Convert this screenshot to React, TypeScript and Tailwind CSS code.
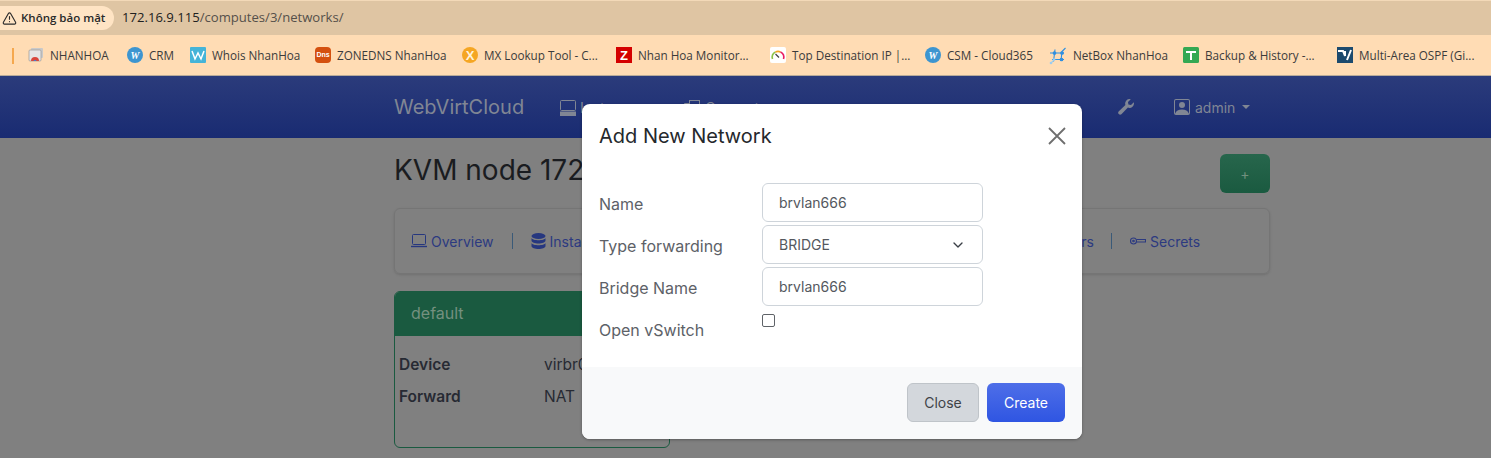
import { AlertTriangle, ChevronDown } from "lucide-react";

// favicons for the bookmark bar
function Fav({ kind }: { kind: string }) {
  if (kind === "w") {
    return (
      <span className="flex h-4 w-4 items-center justify-center rounded-full bg-[#3d95d0] text-[10px] font-bold italic text-white font-['Liberation_Serif',serif]">
        W
      </span>
    );
  }
  if (kind === "chrome") {
    return (
      <svg width="16" height="16" viewBox="0 0 16 16">
        <rect x="3" y="1" width="12" height="10" rx="1" fill="#c9c9c9" />
        <rect x="1" y="3" width="12" height="11" rx="1" fill="#e6e6e6" stroke="#9a9a9a" strokeWidth="0.7" />
        <path d="M3 14a4 4 0 0 1 8 0z" fill="#d9473d" />
        <path d="M5.5 14a1.6 1.6 0 0 1 3 0z" fill="#3d7fd9" />
      </svg>
    );
  }
  if (kind === "whois") {
    return (
      <svg width="16" height="16" viewBox="0 0 16 16">
        <rect width="16" height="16" rx="1" fill="#45b4d8" />
        <path d="M2 4l3 8 3-6 3 6 3-8" fill="none" stroke="#fff" strokeWidth="1.5" />
      </svg>
    );
  }
  if (kind === "dns") {
    return (
      <span className="flex h-4 w-4 items-center justify-center rounded-sm bg-[#d4500f] text-[7px] font-bold text-white font-['Liberation_Sans',sans-serif]">
        Dns
      </span>
    );
  }
  if (kind === "mx") {
    return (
      <span className="flex h-4 w-4 items-center justify-center rounded-full bg-[#f5a623] text-[13px] font-bold text-[#fff3dc] font-['Liberation_Sans',sans-serif]">
        X
      </span>
    );
  }
  if (kind === "z") {
    return (
      <span className="flex h-4 w-4 items-center justify-center bg-[#d40000] text-[13px] font-bold text-white font-['Liberation_Sans',sans-serif]">
        Z
      </span>
    );
  }
  if (kind === "gauge") {
    return (
      <svg width="16" height="16" viewBox="0 0 16 16">
        <rect width="16" height="16" rx="2" fill="#fff" />
        <path d="M2.500 12a6 6 0 0 1 3-7" fill="none" stroke="#8bc34a" strokeWidth="1.6" />
        <path d="M5.500 5a6 6 0 0 1 5 0" fill="none" stroke="#f5a623" strokeWidth="1.6" />
        <path d="M10.500 5a6 6 0 0 1 3 7" fill="none" stroke="#e91e63" strokeWidth="1.6" />
        <path d="M5.500 7l3.500 3.500" stroke="#444" strokeWidth="1.2" />
      </svg>
    );
  }
  if (kind === "netbox") {
    return (
      <svg width="18" height="18" viewBox="0 0 18 18" fill="none" stroke="#2f8fe0" strokeWidth="1.1">
        <path d="M1 6h14M3 12.500h12M6 2.500l-1.500 12M13 4l-1 10M16.500 1L13 4.500" />
        <path d="M5 13l-3 3" stroke="#9ccdf0" />
        <circle cx="13" cy="6" r="1.300" fill="#2f8fe0" />
        <circle cx="12.500" cy="12.500" r="1.300" fill="#2f8fe0" />
        <circle cx="5.500" cy="6" r="1.300" fill="#2f8fe0" />
        <circle cx="5" cy="12.500" r="1.300" fill="#9ccdf0" stroke="none" />
        <circle cx="2" cy="16" r="1.300" fill="#9ccdf0" stroke="none" />
      </svg>
    );
  }
  if (kind === "sheet") {
    return (
      <svg width="16" height="16" viewBox="0 0 16 16">
        <rect width="16" height="16" rx="1.500" fill="#34a853" />
        <path d="M3 5h10M8 5v8" stroke="#fff" strokeWidth="2" />
      </svg>
    );
  }
  return (
    <svg width="16" height="16" viewBox="0 0 16 16">
      <rect width="16" height="16" fill="#1c4a6e" />
      <path d="M1 4h5l2 5V4M10 13l4-10" fill="none" stroke="#fff" strokeWidth="2" />
    </svg>
  );
}

const bookmarks = [
  { kind: "chrome", label: "NHANHOA", w: "w-[99px]" },
  { kind: "w", label: "CRM", w: "w-[63px]" },
  { kind: "whois", label: "Whois NhanHoa", w: "w-[125px]" },
  { kind: "dns", label: "ZONEDNS NhanHoa", w: "w-[147px]" },
  { kind: "mx", label: "MX Lookup Tool - C...", w: "w-[154px]" },
  { kind: "z", label: "Nhan Hoa Monitor...", w: "w-[154px]" },
  { kind: "gauge", label: "Top Destination IP |...", w: "w-[155px]" },
  { kind: "w", label: "CSM - Cloud365", w: "w-[124px]" },
  { kind: "netbox", label: "NetBox NhanHoa", w: "w-[134px]" },
  { kind: "sheet", label: "Backup & History -...", w: "w-[154px]" },
  { kind: "vmware", label: "Multi-Area OSPF (Gi...", w: "w-[150px]" },
];

function Field({ label, children }: { label: string; children: React.ReactNode }) {
  return (
    <div className="flex h-[39px] items-center">
      <label className="w-[163px] pt-[3px] text-[16px] text-[#5d6167]">{label}</label>
      {children}
    </div>
  );
}

export default function App() {
  return (
    <div className="relative h-[458px] w-[1491px] overflow-hidden bg-[#808080] font-['Inter',sans-serif]">
      {/* browser chrome */}
      <div className="flex h-[35px] items-center border-t border-[#f3d9b8] bg-[#dfc5a3]">
        <div className="flex h-[24px] w-[114px] items-center gap-[4px] rounded-r-full bg-[#ffe4c4] pl-[2px] font-['Open_Sans',sans-serif] text-[11.5px] font-semibold text-[#2a2a2a]">
          <AlertTriangle size={15} strokeWidth={1.8} />
          <span>Không bảo mật</span>
        </div>
        <div className="ml-[8px] font-['Open_Sans',sans-serif] text-[13.1px] text-[#55504a]">
          <span className="text-[#202020]">172.16.9.115</span>/computes/3/networks/
        </div>
      </div>
      <div className="flex h-[40px] items-center bg-[#ffdcb4] pt-[1px] font-['Open_Sans',sans-serif] text-[11.7px] text-[#3b3b3b]">
        <div className="ml-[12px] mr-[14px] h-[16px] w-[2px] bg-[#f5a84e]" />
        {bookmarks.map((b, i) => (
          <div key={i} className={`flex items-center gap-[6px] whitespace-nowrap ${b.w}`}>
            <Fav kind={b.kind} />
            <span>{b.label}</span>
          </div>
        ))}
      </div>
      <div className="h-px bg-[#b8ab9a]" />

      {/* navbar, dimmed by the modal backdrop */}
      <nav className="flex h-[62px] items-center bg-gradient-to-b from-[#2b3b7b] to-[#192b72] pl-[394px] text-[14.5px] text-[#808694]">
        <span className="w-[166px] text-[20px]">WebVirtCloud</span>
        <div className="flex w-[124px] items-center gap-[4px] pt-[2px]">
          <svg width="16" height="16" viewBox="0 0 16 16" fill="none" stroke="currentColor">
            <rect x="0.500" y="0.500" width="15" height="10" rx="1" />
            <rect x="0.500" y="12" width="15" height="3.500" fill="currentColor" />
          </svg>
          <span>Instances</span>
        </div>
        <div className="flex w-[434px] items-center gap-[5px] pt-[2px]">
          <svg width="16" height="16" viewBox="0 0 16 16" fill="none" stroke="currentColor">
            <rect x="5.500" y="0.500" width="10" height="8" />
            <path d="M0.500 3.500h5M0.500 3.500v8h10v-3" />
          </svg>
          <span>Computes</span>
        </div>
        <svg width="16" height="16" viewBox="0 0 16 16" fill="currentColor">
          <path d="M15.800 3.200a4.500 4.500 0 0 1-5.900 5.400L3.400 15.300a2 2 0 0 1-2.800-2.800l6.800-6.500A4.500 4.500 0 0 1 12.800.200L10 3l.4 2.600 2.600.4z" />
        </svg>
        <svg className="ml-[40px]" width="16" height="16" viewBox="0 0 16 16" fill="currentColor">
          <path d="M2 0h12a2 2 0 0 1 2 2v12a2 2 0 0 1-2 2H2a2 2 0 0 1-2-2V2a2 2 0 0 1 2-2zm0 1a1 1 0 0 0-1 1v12l.2.4C2 12 4.500 10.500 8 10.500s6 1.500 6.800 3.900L15 14V2a1 1 0 0 0-1-1z" />
          <circle cx="8" cy="6" r="3" />
        </svg>
        <span className="ml-[5px] text-[14px]">admin</span>
        <span className="ml-[7px] h-0 w-0 border-x-[4px] border-t-[4px] border-x-transparent border-t-[#808694]" />
      </nav>

      {/* page behind the modal */}
      <main className="ml-[394px] w-[876px] text-[#1a1c20]">
        <div className="flex h-[70px] items-start justify-between pt-[16px]">
          <h1 className="-mt-[1px] text-[28px] leading-[34px]">KVM node 172.16.9.115</h1>
          <div className="flex h-[39px] w-[50px] items-center justify-center rounded-[6px] bg-gradient-to-b from-[#27664c] to-[#1a5a40] text-[14px] text-[#71907f]">
            +
          </div>
        </div>
        <div className="flex h-[66px] items-center rounded-[6px] border border-[#757575] pl-[16px] text-[14px] text-[#2c3a80] shadow-sm">
          <svg width="16" height="14" viewBox="0 0 16 14" fill="none" stroke="#26377f">
            <rect x="1.500" y="0.500" width="13" height="10" rx="1" />
            <path d="M0 12.500h16" strokeWidth="1.400" />
          </svg>
          <span className="ml-[4px]">Overview</span>
          <span className="ml-[18px] h-[16px] w-px bg-[#3a5a78]" />
          <svg className="ml-[18px]" width="15" height="16" viewBox="0 0 15 16" fill="#26377f">
            <ellipse cx="7.500" cy="3" rx="7" ry="3" />
            <path d="M0.500 5c1 3 13 3 14 0v2.500c0 4-14 4-14 0zM0.500 10c1 3 13 3 14 0v3c0 4-14 4-14 0z" />
          </svg>
          <span className="ml-[4px]">Instances</span>
          <span className="ml-[468px]">rs</span>
          <span className="ml-[17px] h-[16px] w-px bg-[#3a5a78]" />
          <svg className="ml-[18px]" width="16" height="10" viewBox="0 0 16 10" fill="none" stroke="#2c3a80" strokeWidth="1.100">
            <circle cx="3.500" cy="5" r="3" />
            <circle cx="3.500" cy="5" r="0.800" />
            <path d="M6.500 3.500h9v2.500h-9" />
          </svg>
          <span className="ml-[4px]">Secrets</span>
        </div>
        <div className="mt-[17px] h-[157px] w-[276px] overflow-hidden rounded-[6px] border border-[#1a5a40]">
          <div className="flex h-[44px] items-center bg-[#1a5a40] pb-[2px] pl-[16px] text-[16px] text-[#74907f]">default</div>
          <div className="grid grid-cols-[145px_1fr] gap-y-[11px] pl-[4px] pt-[18px] text-[15.500px] leading-[21px] text-[#272a33]">
            <b className="font-semibold">Device</b>
            <span>virbr0</span>
            <b className="font-semibold">Forward</b>
            <span>NAT</span>
          </div>
        </div>
      </main>

      {/* modal */}
      <div className="absolute left-[582px] top-[104px] flex h-[335px] w-[500px] flex-col overflow-hidden rounded-[8px] bg-white shadow-[0_1px_3px_rgba(0,0,0,0.3)]">
        <div className="flex h-[63px] items-center justify-between pl-[17px] pr-[16px]">
          <h2 className="text-[20px] text-[#25282c]">Add New Network</h2>
          <svg width="18" height="18" viewBox="0 0 18 18" stroke="#6e6e6e" strokeWidth="1.800">
            <path d="M1 1l16 16M17 1L1 17" />
          </svg>
        </div>
        <form className="flex flex-1 flex-col gap-[3px] pl-[17px] pt-[16px]">
          <Field label="Name">
            <div className="flex h-[39px] w-[221px] items-center rounded-[6px] border border-[#ced4da] pl-[16px] text-[14px] text-[#54585e]">brvlan666</div>
          </Field>
          <Field label="Type forwarding">
            <div className="flex h-[39px] w-[221px] items-center justify-between rounded-[6px] border border-[#ced4da] pl-[16px] pr-[16px] text-[14px] text-[#54585e]">
              BRIDGE
              <ChevronDown size={16} strokeWidth={2} className="text-[#3a3f46]" />
            </div>
          </Field>
          <Field label="Bridge Name">
            <div className="flex h-[39px] w-[221px] items-center rounded-[6px] border border-[#ced4da] pl-[16px] text-[14px] text-[#54585e]">brvlan666</div>
          </Field>
          <div className="flex h-[39px] items-start">
            <label className="w-[163px] pt-[9px] text-[16px] text-[#5d6167]">Open vSwitch</label>
            <input type="checkbox" className="mt-[5px] h-[13px] w-[13px] appearance-none rounded-[2px] border border-[#5f6368] bg-white" />
          </div>
        </form>
        <div className="flex h-[72px] items-center justify-end gap-[8px] bg-[#f8f9fa] pb-[2px] pr-[17px] text-[14px]">
          <button className="h-[39px] w-[72px] rounded-[6px] border border-[#bfc4c9] bg-[#d3d7dc] pt-[1px] text-[#3f4348]">Close</button>
          <button className="h-[39px] w-[78px] rounded-[6px] bg-gradient-to-b from-[#4e6ee8] to-[#2f55e2] pt-[1px] text-white">Create</button>
        </div>
      </div>
    </div>
  );
}
